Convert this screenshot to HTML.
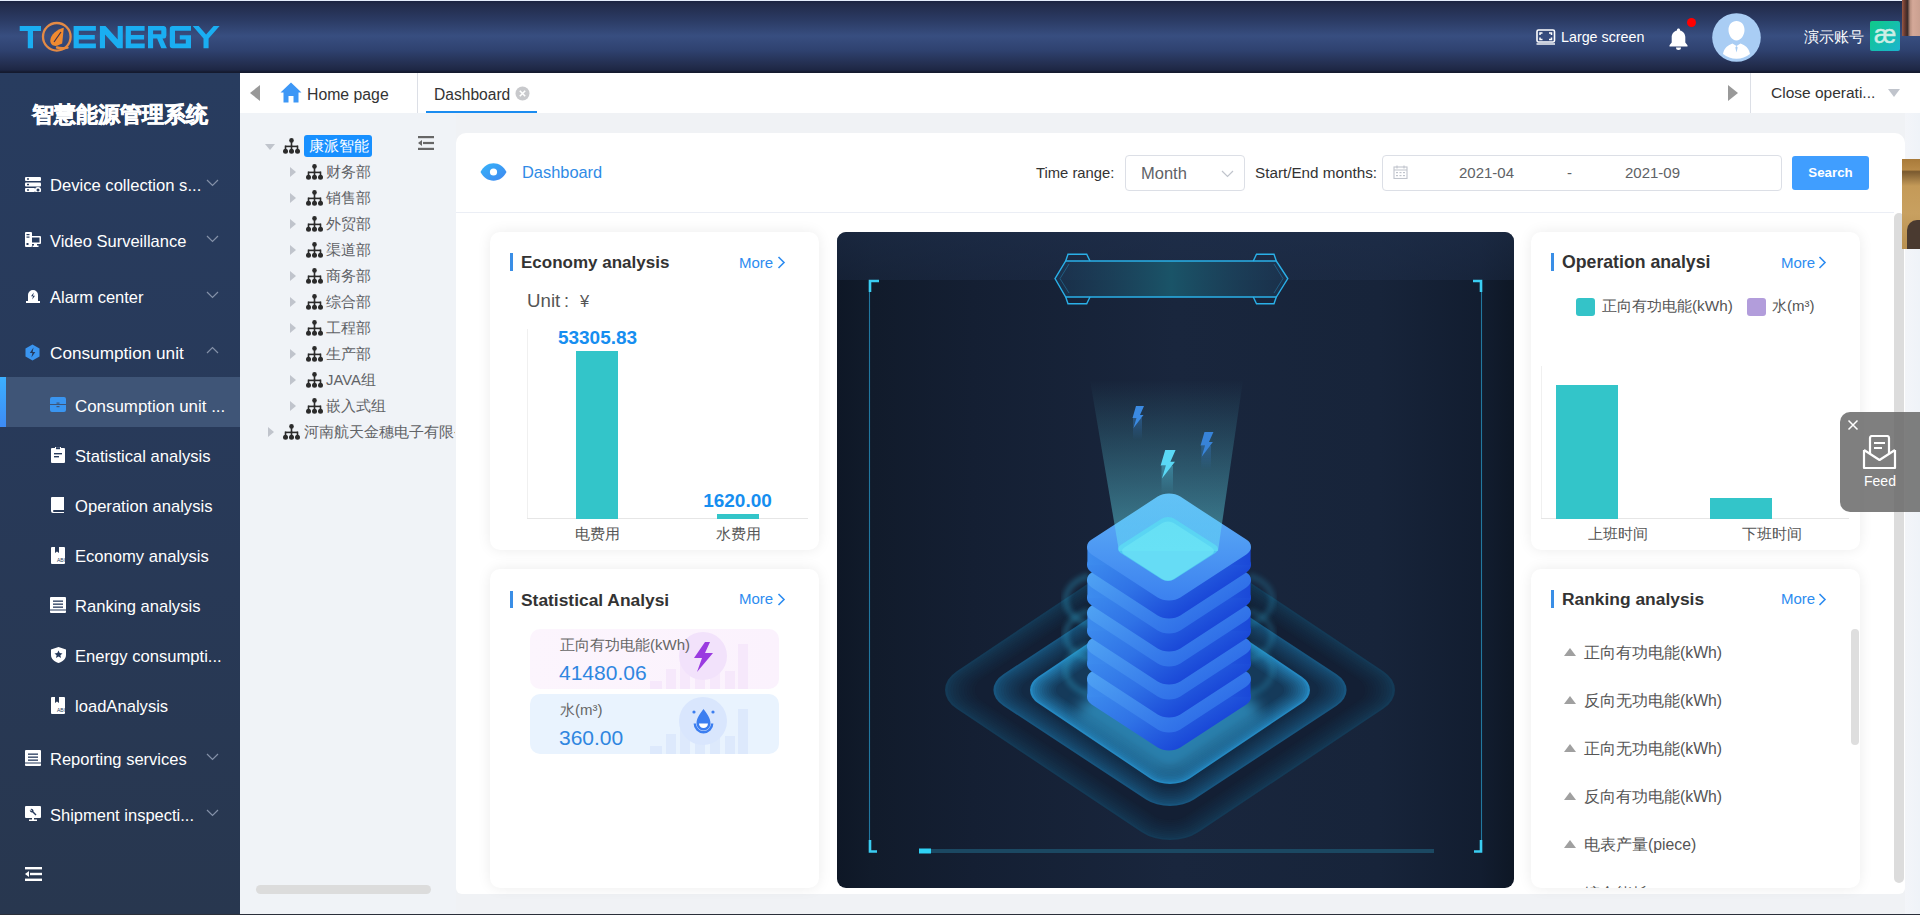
<!DOCTYPE html>
<html><head><meta charset="utf-8">
<style>
*{box-sizing:border-box;margin:0;padding:0}
html,body{width:1920px;height:915px;overflow:hidden;background:#f0f2f5;font-family:"Liberation Sans",sans-serif;position:relative}
.a{position:absolute}
.hdr{left:0;top:0;width:1920px;height:73px;background:linear-gradient(to bottom,#e6eefc 0,#e6eefc 1px,#1a2240 1px,#222b4a 4px,#2b3b64 20px,#384e80 36px,#2f4270 50px,#222c4c 66px,#1d2644 70px,#141a2e 72px,#141a2e 73px)}
.side{left:0;top:73px;width:240px;height:842px;background:linear-gradient(180deg,#283c5f 0,#283a5a 40%,#28374f 100%)}
.tabs{left:240px;top:73px;width:1680px;height:40px;background:#fff}
.tree{left:240px;top:113px;width:216px;height:802px;background:#f0f3f7}
.card{left:456px;top:133px;width:1449px;height:761px;background:#fff;border-radius:10px 10px 6px 6px}
.sc{background:#fff;border-radius:10px;box-shadow:0 0 14px rgba(0,0,0,.08)}
.mi{color:#fff;font-size:16.5px;white-space:nowrap}
.tt{color:#333;font-size:18px;font-weight:bold}
.more{color:#2d8cf0;font-size:16px}
</style></head><body>
<div class="a hdr"></div>
<div class="a side"></div>
<div class="a tabs"></div>
<div class="a tree"></div>
<div class="a card"></div>


<!-- HEADER -->
<svg class="a" style="left:18px;top:20px" width="205" height="34" viewBox="18 20 205 34">
<g fill="#1aaef2">
<path d="M19.7 26h21.3v5h-8v17.2h-5.2V31h-8.1z"/>
<path d="M73.6 26h22.3v4.8H78.8v4.2h16v4.6h-16v3.8h17.1v4.8H73.6z"/>
<path d="M99.9 26h5.6l12.2 13.5V26h5.1v22.2h-5.3l-12.5-13.8v13.8h-5.1z"/>
<path d="M125.7 26h18.9v4.8h-13.7v4.2h13.2v4.6h-13.2v3.8h13.8v4.8h-19z"/>
<path d="M148 26h16a3 3 0 0 1 2.4 3v6.5a3 3 0 0 1-2.4 3h-1.5l4.4 9.7h-5.6l-4.2-9.6h-4v9.6H148zM153.1 30.6v3.7h8.2v-3.7z"/>
<path d="M172.5 26h18.5v4.8h-16v12.6h10.8v-3.8h-6v-4.3h11.2v12.9h-18.5a2.7 2.7 0 0 1-2.7-2.7V28.7a2.7 2.7 0 0 1 2.7-2.7z"/>
<path d="M192.7 26h6l7.4 8.6 7.5-8.6h6l-11 12.4v9.8h-5.1v-9.8z"/>
</g>
<circle cx="56.8" cy="36.8" r="13.8" fill="none" stroke="#e38a45" stroke-width="2.3"/>
<path d="M57 47.5 C61 48.5 64.5 48.3 67.5 47.6" fill="none" stroke="#e8893a" stroke-width="2.4" stroke-linecap="round"/>
<path fill="#f08a30" d="M63.8 27.8 C57 29.5 50.5 34.5 50.3 40.5 C50.2 44.5 53.5 46.5 57 45.8 L62.2 43.5 Z"/>
<path d="M54 42 L61 32" stroke="#3a3050" stroke-width="1.2" fill="none"/>
</svg>
<svg class="a" style="left:1536px;top:29px" width="20" height="16" viewBox="0 0 20 16"><rect x="1" y="1" width="17.5" height="12" rx="1.5" fill="none" stroke="#fff" stroke-width="1.6"/><rect x="0.5" y="14.3" width="18.5" height="1.4" fill="#fff"/><path d="M4 6V4h2.5M15.5 6V4H13M4 8.5v2h2.5M15.5 8.5v2H13" fill="none" stroke="#fff" stroke-width="1.5"/></svg>
<div class="a" style="left:1561px;top:28px;color:#fff;font-size:14.3px;line-height:18px;white-space:nowrap">Large screen</div>
<svg class="a" style="left:1669px;top:27px" width="19" height="23" viewBox="0 0 19 23"><path fill="#fff" d="M9.5 1.5c.9 0 1.5.6 1.5 1.4v.6c3.2.7 5.3 3.4 5.3 6.8v5.2l2.2 2.7v1.3H.5v-1.3l2.2-2.7v-5.2c0-3.4 2.1-6.1 5.3-6.8v-.6c0-.8.6-1.4 1.5-1.4zM7 20.5h5a2.5 2.5 0 0 1-5 0z"/></svg>
<div class="a" style="left:1687px;top:18px;width:9px;height:9px;border-radius:50%;background:#f00"></div>
<svg class="a" style="left:1712px;top:13px" width="49" height="49" viewBox="0 0 49 49"><circle cx="24.5" cy="24.5" r="24.3" fill="#a9cdf4"/><path fill="#fff" d="M24.5 8c4.8 0 8 3.8 8 9s-3.5 10.5-8 10.5-8-5.3-8-10.5 3.2-9 8-9zM11 41c1-6 5-9 9.5-10.5l4 2.5 4-2.5C33 32 37 35 38 41c-3.8 3-8.5 4.7-13.5 4.7S14.8 44 11 41z"/><path d="M24.5 33l-1.2 1.5 1.2 5 1.2-5z" fill="#a9cdf4"/></svg>
<div class="a" style="left:1804px;top:28px;color:#fff;font-size:14.8px;line-height:18px;white-space:nowrap">演示账号</div>
<div class="a" style="left:1870px;top:21px;width:30px;height:30px;border-radius:2px;background:linear-gradient(135deg,#0fca88,#1bb4cf)"></div>
<div class="a" style="left:1870px;top:20px;width:30px;height:30px;color:#cdeee6;font-size:25px;line-height:28px;text-align:center;-webkit-text-stroke:0.5px #cdeee6">æ</div>
<div class="a" style="left:1902px;top:0;width:18px;height:36px;background:linear-gradient(90deg,#9a5a45 0,#6a3a30 15%,#3a2a28 30%,#b89080 45%,#d4a898 60%,#caa090 100%)"></div>

<!-- TABS -->
<div class="a" style="left:250px;top:85px;width:0;height:0;border-top:8px solid transparent;border-bottom:8px solid transparent;border-right:10px solid #999"></div>
<svg class="a" style="left:280px;top:82px" width="22" height="21" viewBox="0 0 22 21"><path fill="#3d97f6" d="M11 0.5l10.5 10h-3v10h-5v-6.5h-5v6.5h-5v-10h-3z"/></svg>
<div class="a" style="left:307px;top:85.5px;color:#333;font-size:15.8px;line-height:18px;white-space:nowrap">Home page</div>
<div class="a" style="left:417px;top:73px;width:1px;height:40px;background:#dcdfe6"></div>
<div class="a" style="left:434px;top:85.5px;color:#333;font-size:15.6px;line-height:18px;white-space:nowrap">Dashboard</div>
<svg class="a" style="left:515px;top:86px" width="15" height="15" viewBox="0 0 15 15"><circle cx="7.5" cy="7.5" r="7" fill="#c8c9cc"/><path d="M4.8 4.8l5.4 5.4M10.2 4.8l-5.4 5.4" stroke="#fff" stroke-width="1.6"/></svg>
<div class="a" style="left:426px;top:111px;width:111px;height:2px;background:#1a8cf0"></div>
<div class="a" style="left:1728px;top:85px;width:0;height:0;border-top:8px solid transparent;border-bottom:8px solid transparent;border-left:10px solid #999"></div>
<div class="a" style="left:1750px;top:73px;width:1px;height:40px;background:#dcdfe6"></div>
<div class="a" style="left:1771px;top:84px;color:#333;font-size:15.5px;line-height:18px;white-space:nowrap">Close operati...</div>
<div class="a" style="left:1888px;top:89px;width:0;height:0;border-left:6px solid transparent;border-right:6px solid transparent;border-top:8px solid #c0c4cc"></div>

<!-- TREE -->
<div class="a" style="left:265px;top:144px;width:0;height:0;border-left:5px solid transparent;border-right:5px solid transparent;border-top:6px solid #c0c4cc"></div>
<div class="a" style="left:283px;top:138px"><svg width="17" height="16" viewBox="0 0 17 16"><g fill="#2b2b2b"><circle cx="8.5" cy="2.4" r="2.3"/><rect x="7.7" y="3" width="1.6" height="6"/><rect x="2" y="7.6" width="13" height="1.6"/><rect x="1.7" y="7.6" width="1.6" height="4"/><rect x="13.7" y="7.6" width="1.6" height="4"/><rect x="7.7" y="7.6" width="1.6" height="4"/><circle cx="2.5" cy="13.2" r="2.5"/><circle cx="8.5" cy="13.2" r="2.5"/><circle cx="14.5" cy="13.2" r="2.5"/></g></svg></div>
<div class="a" style="left:304px;top:135px;width:68px;height:22px;background:#1890ff;border-radius:3px"></div>
<div class="a" style="left:309px;top:137px;color:#fff;font-size:14.8px;line-height:18px;white-space:nowrap">康派智能</div>
<svg class="a" style="left:418px;top:136px" width="16" height="14" viewBox="0 0 16 14"><g fill="#666"><rect x="0" y="0" width="16" height="2.2"/><rect x="5" y="5.9" width="11" height="2.2"/><rect x="0" y="11.8" width="16" height="2.2"/><path d="M0 7l4-3v6z"/></g></svg>
<div class="a" style="left:290px;top:167px;width:0;height:0;border-top:5px solid transparent;border-bottom:5px solid transparent;border-left:6px solid #c0c4cc"></div>
<div class="a" style="left:306px;top:164px"><svg width="17" height="16" viewBox="0 0 17 16"><g fill="#2b2b2b"><circle cx="8.5" cy="2.4" r="2.3"/><rect x="7.7" y="3" width="1.6" height="6"/><rect x="2" y="7.6" width="13" height="1.6"/><rect x="1.7" y="7.6" width="1.6" height="4"/><rect x="13.7" y="7.6" width="1.6" height="4"/><rect x="7.7" y="7.6" width="1.6" height="4"/><circle cx="2.5" cy="13.2" r="2.5"/><circle cx="8.5" cy="13.2" r="2.5"/><circle cx="14.5" cy="13.2" r="2.5"/></g></svg></div>
<div class="a" style="left:326px;top:163px;color:#606266;font-size:14.8px;line-height:18px;white-space:nowrap">财务部</div>
<div class="a" style="left:290px;top:193px;width:0;height:0;border-top:5px solid transparent;border-bottom:5px solid transparent;border-left:6px solid #c0c4cc"></div>
<div class="a" style="left:306px;top:190px"><svg width="17" height="16" viewBox="0 0 17 16"><g fill="#2b2b2b"><circle cx="8.5" cy="2.4" r="2.3"/><rect x="7.7" y="3" width="1.6" height="6"/><rect x="2" y="7.6" width="13" height="1.6"/><rect x="1.7" y="7.6" width="1.6" height="4"/><rect x="13.7" y="7.6" width="1.6" height="4"/><rect x="7.7" y="7.6" width="1.6" height="4"/><circle cx="2.5" cy="13.2" r="2.5"/><circle cx="8.5" cy="13.2" r="2.5"/><circle cx="14.5" cy="13.2" r="2.5"/></g></svg></div>
<div class="a" style="left:326px;top:189px;color:#606266;font-size:14.8px;line-height:18px;white-space:nowrap">销售部</div>
<div class="a" style="left:290px;top:219px;width:0;height:0;border-top:5px solid transparent;border-bottom:5px solid transparent;border-left:6px solid #c0c4cc"></div>
<div class="a" style="left:306px;top:216px"><svg width="17" height="16" viewBox="0 0 17 16"><g fill="#2b2b2b"><circle cx="8.5" cy="2.4" r="2.3"/><rect x="7.7" y="3" width="1.6" height="6"/><rect x="2" y="7.6" width="13" height="1.6"/><rect x="1.7" y="7.6" width="1.6" height="4"/><rect x="13.7" y="7.6" width="1.6" height="4"/><rect x="7.7" y="7.6" width="1.6" height="4"/><circle cx="2.5" cy="13.2" r="2.5"/><circle cx="8.5" cy="13.2" r="2.5"/><circle cx="14.5" cy="13.2" r="2.5"/></g></svg></div>
<div class="a" style="left:326px;top:215px;color:#606266;font-size:14.8px;line-height:18px;white-space:nowrap">外贸部</div>
<div class="a" style="left:290px;top:245px;width:0;height:0;border-top:5px solid transparent;border-bottom:5px solid transparent;border-left:6px solid #c0c4cc"></div>
<div class="a" style="left:306px;top:242px"><svg width="17" height="16" viewBox="0 0 17 16"><g fill="#2b2b2b"><circle cx="8.5" cy="2.4" r="2.3"/><rect x="7.7" y="3" width="1.6" height="6"/><rect x="2" y="7.6" width="13" height="1.6"/><rect x="1.7" y="7.6" width="1.6" height="4"/><rect x="13.7" y="7.6" width="1.6" height="4"/><rect x="7.7" y="7.6" width="1.6" height="4"/><circle cx="2.5" cy="13.2" r="2.5"/><circle cx="8.5" cy="13.2" r="2.5"/><circle cx="14.5" cy="13.2" r="2.5"/></g></svg></div>
<div class="a" style="left:326px;top:241px;color:#606266;font-size:14.8px;line-height:18px;white-space:nowrap">渠道部</div>
<div class="a" style="left:290px;top:271px;width:0;height:0;border-top:5px solid transparent;border-bottom:5px solid transparent;border-left:6px solid #c0c4cc"></div>
<div class="a" style="left:306px;top:268px"><svg width="17" height="16" viewBox="0 0 17 16"><g fill="#2b2b2b"><circle cx="8.5" cy="2.4" r="2.3"/><rect x="7.7" y="3" width="1.6" height="6"/><rect x="2" y="7.6" width="13" height="1.6"/><rect x="1.7" y="7.6" width="1.6" height="4"/><rect x="13.7" y="7.6" width="1.6" height="4"/><rect x="7.7" y="7.6" width="1.6" height="4"/><circle cx="2.5" cy="13.2" r="2.5"/><circle cx="8.5" cy="13.2" r="2.5"/><circle cx="14.5" cy="13.2" r="2.5"/></g></svg></div>
<div class="a" style="left:326px;top:267px;color:#606266;font-size:14.8px;line-height:18px;white-space:nowrap">商务部</div>
<div class="a" style="left:290px;top:297px;width:0;height:0;border-top:5px solid transparent;border-bottom:5px solid transparent;border-left:6px solid #c0c4cc"></div>
<div class="a" style="left:306px;top:294px"><svg width="17" height="16" viewBox="0 0 17 16"><g fill="#2b2b2b"><circle cx="8.5" cy="2.4" r="2.3"/><rect x="7.7" y="3" width="1.6" height="6"/><rect x="2" y="7.6" width="13" height="1.6"/><rect x="1.7" y="7.6" width="1.6" height="4"/><rect x="13.7" y="7.6" width="1.6" height="4"/><rect x="7.7" y="7.6" width="1.6" height="4"/><circle cx="2.5" cy="13.2" r="2.5"/><circle cx="8.5" cy="13.2" r="2.5"/><circle cx="14.5" cy="13.2" r="2.5"/></g></svg></div>
<div class="a" style="left:326px;top:293px;color:#606266;font-size:14.8px;line-height:18px;white-space:nowrap">综合部</div>
<div class="a" style="left:290px;top:323px;width:0;height:0;border-top:5px solid transparent;border-bottom:5px solid transparent;border-left:6px solid #c0c4cc"></div>
<div class="a" style="left:306px;top:320px"><svg width="17" height="16" viewBox="0 0 17 16"><g fill="#2b2b2b"><circle cx="8.5" cy="2.4" r="2.3"/><rect x="7.7" y="3" width="1.6" height="6"/><rect x="2" y="7.6" width="13" height="1.6"/><rect x="1.7" y="7.6" width="1.6" height="4"/><rect x="13.7" y="7.6" width="1.6" height="4"/><rect x="7.7" y="7.6" width="1.6" height="4"/><circle cx="2.5" cy="13.2" r="2.5"/><circle cx="8.5" cy="13.2" r="2.5"/><circle cx="14.5" cy="13.2" r="2.5"/></g></svg></div>
<div class="a" style="left:326px;top:319px;color:#606266;font-size:14.8px;line-height:18px;white-space:nowrap">工程部</div>
<div class="a" style="left:290px;top:349px;width:0;height:0;border-top:5px solid transparent;border-bottom:5px solid transparent;border-left:6px solid #c0c4cc"></div>
<div class="a" style="left:306px;top:346px"><svg width="17" height="16" viewBox="0 0 17 16"><g fill="#2b2b2b"><circle cx="8.5" cy="2.4" r="2.3"/><rect x="7.7" y="3" width="1.6" height="6"/><rect x="2" y="7.6" width="13" height="1.6"/><rect x="1.7" y="7.6" width="1.6" height="4"/><rect x="13.7" y="7.6" width="1.6" height="4"/><rect x="7.7" y="7.6" width="1.6" height="4"/><circle cx="2.5" cy="13.2" r="2.5"/><circle cx="8.5" cy="13.2" r="2.5"/><circle cx="14.5" cy="13.2" r="2.5"/></g></svg></div>
<div class="a" style="left:326px;top:345px;color:#606266;font-size:14.8px;line-height:18px;white-space:nowrap">生产部</div>
<div class="a" style="left:290px;top:375px;width:0;height:0;border-top:5px solid transparent;border-bottom:5px solid transparent;border-left:6px solid #c0c4cc"></div>
<div class="a" style="left:306px;top:372px"><svg width="17" height="16" viewBox="0 0 17 16"><g fill="#2b2b2b"><circle cx="8.5" cy="2.4" r="2.3"/><rect x="7.7" y="3" width="1.6" height="6"/><rect x="2" y="7.6" width="13" height="1.6"/><rect x="1.7" y="7.6" width="1.6" height="4"/><rect x="13.7" y="7.6" width="1.6" height="4"/><rect x="7.7" y="7.6" width="1.6" height="4"/><circle cx="2.5" cy="13.2" r="2.5"/><circle cx="8.5" cy="13.2" r="2.5"/><circle cx="14.5" cy="13.2" r="2.5"/></g></svg></div>
<div class="a" style="left:326px;top:371px;color:#606266;font-size:14.8px;line-height:18px;white-space:nowrap">JAVA组</div>
<div class="a" style="left:290px;top:401px;width:0;height:0;border-top:5px solid transparent;border-bottom:5px solid transparent;border-left:6px solid #c0c4cc"></div>
<div class="a" style="left:306px;top:398px"><svg width="17" height="16" viewBox="0 0 17 16"><g fill="#2b2b2b"><circle cx="8.5" cy="2.4" r="2.3"/><rect x="7.7" y="3" width="1.6" height="6"/><rect x="2" y="7.6" width="13" height="1.6"/><rect x="1.7" y="7.6" width="1.6" height="4"/><rect x="13.7" y="7.6" width="1.6" height="4"/><rect x="7.7" y="7.6" width="1.6" height="4"/><circle cx="2.5" cy="13.2" r="2.5"/><circle cx="8.5" cy="13.2" r="2.5"/><circle cx="14.5" cy="13.2" r="2.5"/></g></svg></div>
<div class="a" style="left:326px;top:397px;color:#606266;font-size:14.8px;line-height:18px;white-space:nowrap">嵌入式组</div>
<div class="a" style="left:268px;top:427px;width:0;height:0;border-top:5px solid transparent;border-bottom:5px solid transparent;border-left:6px solid #c0c4cc"></div>
<div class="a" style="left:283px;top:424px"><svg width="17" height="16" viewBox="0 0 17 16"><g fill="#2b2b2b"><circle cx="8.5" cy="2.4" r="2.3"/><rect x="7.7" y="3" width="1.6" height="6"/><rect x="2" y="7.6" width="13" height="1.6"/><rect x="1.7" y="7.6" width="1.6" height="4"/><rect x="13.7" y="7.6" width="1.6" height="4"/><rect x="7.7" y="7.6" width="1.6" height="4"/><circle cx="2.5" cy="13.2" r="2.5"/><circle cx="8.5" cy="13.2" r="2.5"/><circle cx="14.5" cy="13.2" r="2.5"/></g></svg></div>
<div class="a" style="left:304px;top:423px;width:151px;overflow:hidden;color:#606266;font-size:14.8px;line-height:18px;white-space:nowrap">河南航天金穗电子有限公司</div>
<div class="a" style="left:256px;top:885px;width:175px;height:9px;border-radius:5px;background:#dcdcdc"></div>


<!-- CARD HEADER -->
<svg class="a" style="left:480px;top:163px" width="27" height="18" viewBox="0 0 27 18"><defs><linearGradient id="eg" x1="0" y1="0" x2="1" y2="1"><stop offset="0" stop-color="#36b4fa"/><stop offset="1" stop-color="#3f86ef"/></linearGradient></defs><path fill="url(#eg)" d="M0.5 9C3.5 3.5 8 0.3 13.5 0.3S23.5 3.5 26.5 9c-3 5.5-7.5 8.7-13 8.7S3.5 14.5 0.5 9z"/><circle cx="13.5" cy="9" r="3.6" fill="#fff"/></svg>
<div class="a" style="left:522px;top:163px;color:#2f8be6;font-size:16.4px;line-height:18px;white-space:nowrap">Dashboard</div>
<div class="a" style="left:1036px;top:164px;color:#333;font-size:14.8px;line-height:18px;white-space:nowrap">Time range:</div>
<div class="a" style="left:1125px;top:155px;width:120px;height:36px;border:1px solid #dcdfe6;border-radius:4px;background:#fff"></div>
<div class="a" style="left:1141px;top:163.5px;color:#606266;font-size:16.5px;line-height:18px;white-space:nowrap">Month</div>
<svg class="a" style="left:1221px;top:170px" width="13" height="8" viewBox="0 0 13 8"><path d="M1 1l5.5 5.5L12 1" fill="none" stroke="#c0c4cc" stroke-width="1.2"/></svg>
<div class="a" style="left:1255px;top:164px;color:#333;font-size:15.25px;line-height:18px;white-space:nowrap">Start/End months:</div>
<div class="a" style="left:1382px;top:155px;width:400px;height:36px;border:1px solid #dcdfe6;border-radius:4px;background:#fff"></div>
<svg class="a" style="left:1393px;top:165px" width="15" height="14" viewBox="0 0 15 14"><g fill="none" stroke="#c0c4cc" stroke-width="1.1"><rect x="1" y="2" width="13" height="11.5"/><path d="M1 5h13M4 0.5v3M11 0.5v3"/></g><g fill="#c0c4cc"><rect x="3" y="7" width="2" height="1.2"/><rect x="6.5" y="7" width="2" height="1.2"/><rect x="10" y="7" width="2" height="1.2"/><rect x="3" y="10" width="2" height="1.2"/><rect x="6.5" y="10" width="2" height="1.2"/><rect x="10" y="10" width="2" height="1.2"/></g></svg>
<div class="a" style="left:1459px;top:164px;color:#606266;font-size:15px;line-height:18px;white-space:nowrap">2021-04</div>
<div class="a" style="left:1567px;top:164px;color:#606266;font-size:15px;line-height:18px;white-space:nowrap">-</div>
<div class="a" style="left:1625px;top:164px;color:#606266;font-size:15px;line-height:18px;white-space:nowrap">2021-09</div>
<div class="a" style="left:1792px;top:156px;width:77px;height:34px;background:#409eff;border-radius:3px"></div>
<div class="a" style="left:1792px;top:164px;width:77px;text-align:center;color:#fff;font-size:13.3px;font-weight:bold;line-height:18px">Search</div>
<div class="a" style="left:456px;top:212px;width:1438px;height:1px;background:#ebeef5"></div>

<!-- SUB CARDS -->
<div class="a sc" style="left:490px;top:232px;width:329px;height:318px"></div>
<div class="a sc" style="left:490px;top:569px;width:329px;height:319px"></div>
<div class="a sc" style="left:1531px;top:232px;width:329px;height:318px"></div>
<div class="a sc" style="left:1531px;top:569px;width:329px;height:319px"></div>

<!-- Economy -->
<div class="a" style="left:510px;top:253px;width:3px;height:18px;background:#3a8ee6"></div>
<div class="a tt" style="left:521px;top:254px;font-size:17px;line-height:18px">Economy analysis</div>
<div class="a more" style="left:739px;top:254px;font-size:15px;line-height:18px">More</div>
<svg class="a" style="left:777px;top:256px" width="9" height="13" viewBox="0 0 9 13"><path d="M1.5 1l5.5 5.5L1.5 12" fill="none" stroke="#2d8cf0" stroke-width="1.6"/></svg>
<div class="a" style="left:527px;top:291px;color:#555;font-size:18.7px;line-height:20px;white-space:nowrap">Unit</div><div class="a" style="left:564px;top:291px;color:#555;font-size:18px;line-height:20px;white-space:nowrap">:</div><div class="a" style="left:580px;top:291px;color:#555;font-size:16.5px;line-height:20px;white-space:nowrap">¥</div>
<div class="a" style="left:527px;top:329px;width:1px;height:190px;background:#f0f0f0"></div>
<div class="a" style="left:527px;top:518px;width:281px;height:1px;background:#e6e6e6"></div>
<div class="a" style="left:576px;top:351px;width:42px;height:168px;background:#33c5c9"></div>
<div class="a" style="left:717px;top:514px;width:42px;height:5px;background:#33c5c9"></div>
<div class="a" style="left:520px;top:328px;width:155px;text-align:center;color:#168ef0;font-size:19px;font-weight:bold;line-height:20px">53305.83</div>
<div class="a" style="left:660px;top:491px;width:155px;text-align:center;color:#168ef0;font-size:19px;font-weight:bold;line-height:20px">1620.00</div>
<div class="a" style="left:547px;top:525px;width:100px;text-align:center;color:#555;font-size:14.5px;line-height:18px">电费用</div>
<div class="a" style="left:688px;top:525px;width:100px;text-align:center;color:#555;font-size:14.5px;line-height:18px">水费用</div>

<!-- Statistical -->
<div class="a" style="left:510px;top:591px;width:3px;height:17px;background:#3a8ee6"></div>
<div class="a tt" style="left:521px;top:591px;font-size:17.4px;line-height:18px">Statistical Analysi</div>
<div class="a more" style="left:739px;top:590px;font-size:15px;line-height:18px">More</div>
<svg class="a" style="left:777px;top:593px" width="9" height="13" viewBox="0 0 9 13"><path d="M1.5 1l5.5 5.5L1.5 12" fill="none" stroke="#2d8cf0" stroke-width="1.6"/></svg>
<div class="a" style="left:530px;top:629px;width:249px;height:60px;border-radius:10px;background:linear-gradient(90deg,#fcf5fd,#fbf2fd);overflow:hidden">
 <svg style="position:absolute;left:120px;top:10px" width="120" height="50" viewBox="0 0 120 50"><g fill="#f6e8fb"><rect x="0" y="42" width="12" height="8"/><rect x="16" y="30" width="10" height="20"/><rect x="30" y="20" width="10" height="30"/><rect x="45" y="35" width="10" height="15"/><rect x="60" y="25" width="10" height="25"/><rect x="75" y="32" width="10" height="18"/><rect x="88" y="5" width="10" height="45"/></g></svg>
 <div style="position:absolute;left:149px;top:3px;width:48px;height:48px;border-radius:50%;background:#f2e2fb"></div>
</div>
<div class="a" style="left:530px;top:694px;width:249px;height:60px;border-radius:10px;background:#e9f3fe;overflow:hidden">
 <svg style="position:absolute;left:120px;top:10px" width="120" height="50" viewBox="0 0 120 50"><g fill="#dde9fc"><rect x="0" y="42" width="12" height="8"/><rect x="16" y="30" width="10" height="20"/><rect x="30" y="20" width="10" height="30"/><rect x="45" y="35" width="10" height="15"/><rect x="60" y="25" width="10" height="25"/><rect x="75" y="32" width="10" height="18"/><rect x="88" y="5" width="10" height="45"/></g></svg>
 <div style="position:absolute;left:149px;top:3px;width:48px;height:48px;border-radius:50%;background:#d9e6fd"></div>
</div>
<svg class="a" style="left:691px;top:641px" width="25" height="32" viewBox="0 0 25 32"><path fill="#9a3be0" d="M14 1L3 17h8l-5 14L22 12h-8l5-11z"/></svg>
<svg class="a" style="left:692px;top:706px" width="23" height="29" viewBox="0 0 23 29"><path fill="#3c7ef0" d="M11.5 3C8 8 4.5 12 4.5 17.5a7 7 0 0 0 14 0C18.5 12 15 8 11.5 3z"/><path fill="#fff" d="M7 17.5h9a4.5 4.5 0 0 1-9 0z"/><path fill="#3c7ef0" d="M8.5 17.5h6a3 3 0 0 1-6 0z" opacity="0"/><circle cx="2" cy="6" r="1.6" fill="#3c7ef0"/><circle cx="21" cy="6" r="1.6" fill="#3c7ef0"/><path d="M2.8 17.5a8.7 8.7 0 0 0 17.4 0" fill="none" stroke="#3c7ef0" stroke-width="2.4"/></svg>
<div class="a" style="left:560px;top:636px;color:#666;font-size:15px;line-height:18px;white-space:nowrap">正向有功电能(kWh)</div>
<div class="a" style="left:559px;top:661px;color:#2f86e0;font-size:21px;line-height:24px;white-space:nowrap">41480.06</div>
<div class="a" style="left:560px;top:701px;color:#666;font-size:15px;line-height:18px;white-space:nowrap">水(m³)</div>
<div class="a" style="left:559px;top:726px;color:#2f86e0;font-size:21px;line-height:24px;white-space:nowrap">360.00</div>

<!-- Operation -->
<div class="a" style="left:1551px;top:253px;width:3px;height:18px;background:#3a8ee6"></div>
<div class="a tt" style="left:1562px;top:253px;font-size:17.7px;line-height:18px">Operation analysi</div>
<div class="a more" style="left:1781px;top:254px;font-size:15px;line-height:18px">More</div>
<svg class="a" style="left:1818px;top:256px" width="9" height="13" viewBox="0 0 9 13"><path d="M1.5 1l5.5 5.5L1.5 12" fill="none" stroke="#2d8cf0" stroke-width="1.6"/></svg>
<div class="a" style="left:1576px;top:298px;width:19px;height:18px;border-radius:3px;background:#34c3c8"></div>
<div class="a" style="left:1602px;top:297px;color:#555;font-size:15.3px;line-height:18px;white-space:nowrap">正向有功电能(kWh)</div>
<div class="a" style="left:1747px;top:298px;width:19px;height:18px;border-radius:3px;background:#b29ddb"></div>
<div class="a" style="left:1772px;top:297px;color:#555;font-size:15px;line-height:18px;white-space:nowrap">水(m³)</div>
<div class="a" style="left:1541px;top:366px;width:1px;height:153px;background:#f0f0f0"></div>
<div class="a" style="left:1541px;top:518px;width:308px;height:1px;background:#e6e6e6"></div>
<div class="a" style="left:1556px;top:385px;width:62px;height:134px;background:#33c5c9"></div>
<div class="a" style="left:1710px;top:498px;width:62px;height:21px;background:#33c5c9"></div>
<div class="a" style="left:1568px;top:525px;width:100px;text-align:center;color:#555;font-size:14.5px;line-height:18px">上班时间</div>
<div class="a" style="left:1722px;top:525px;width:100px;text-align:center;color:#555;font-size:14.5px;line-height:18px">下班时间</div>

<!-- Ranking -->
<div class="a" style="left:1551px;top:590px;width:3px;height:18px;background:#3a8ee6"></div>
<div class="a tt" style="left:1562px;top:590px;font-size:17.4px;line-height:18px">Ranking analysis</div>
<div class="a more" style="left:1781px;top:590px;font-size:15px;line-height:18px">More</div>
<svg class="a" style="left:1818px;top:593px" width="9" height="13" viewBox="0 0 9 13"><path d="M1.5 1l5.5 5.5L1.5 12" fill="none" stroke="#2d8cf0" stroke-width="1.6"/></svg>
<div class="a" style="left:1564px;top:648px;width:0;height:0;border-left:6.5px solid transparent;border-right:6.5px solid transparent;border-bottom:8px solid #a0a0a0"></div>
<div class="a" style="left:1584px;top:644px;color:#555;font-size:15.8px;line-height:18px;white-space:nowrap">正向有功电能(kWh)</div>
<div class="a" style="left:1564px;top:696px;width:0;height:0;border-left:6.5px solid transparent;border-right:6.5px solid transparent;border-bottom:8px solid #a0a0a0"></div>
<div class="a" style="left:1584px;top:692px;color:#555;font-size:15.8px;line-height:18px;white-space:nowrap">反向无功电能(kWh)</div>
<div class="a" style="left:1564px;top:744px;width:0;height:0;border-left:6.5px solid transparent;border-right:6.5px solid transparent;border-bottom:8px solid #a0a0a0"></div>
<div class="a" style="left:1584px;top:740px;color:#555;font-size:15.8px;line-height:18px;white-space:nowrap">正向无功电能(kWh)</div>
<div class="a" style="left:1564px;top:792px;width:0;height:0;border-left:6.5px solid transparent;border-right:6.5px solid transparent;border-bottom:8px solid #a0a0a0"></div>
<div class="a" style="left:1584px;top:788px;color:#555;font-size:15.8px;line-height:18px;white-space:nowrap">反向有功电能(kWh)</div>
<div class="a" style="left:1564px;top:840px;width:0;height:0;border-left:6.5px solid transparent;border-right:6.5px solid transparent;border-bottom:8px solid #a0a0a0"></div>
<div class="a" style="left:1584px;top:836px;color:#555;font-size:15.8px;line-height:18px;white-space:nowrap">电表产量(piece)</div>
<div class="a" style="left:1540px;top:882px;width:300px;height:6px;overflow:hidden"><div style="position:absolute;left:44px;top:3px;color:#555;font-size:15.5px;line-height:18px;white-space:nowrap">综合能耗(kgce)</div></div>
<div class="a" style="left:1851px;top:629px;width:8px;height:116px;border-radius:4px;background:#dedede"></div>


<!-- CENTER -->
<svg class="a" style="left:837px;top:232px" width="677" height="656" viewBox="837 232 677 656">
<defs>
<clipPath id="cc"><rect x="837" y="232" width="677" height="656" rx="9"/></clipPath>
<linearGradient id="bgg" x1="0" y1="0" x2="1" y2="0"><stop offset="0" stop-color="#0e1726"/><stop offset="0.05" stop-color="#111b2b"/><stop offset="0.2" stop-color="#141f33"/><stop offset="0.5" stop-color="#19263d"/><stop offset="0.8" stop-color="#17243a"/><stop offset="0.95" stop-color="#121d30"/><stop offset="1" stop-color="#0e1725"/></linearGradient>
<linearGradient id="topg" x1="0" y1="0" x2="0" y2="1"><stop offset="0" stop-color="#213250" stop-opacity="0.55"/><stop offset="1" stop-color="#213250" stop-opacity="0.35"/></linearGradient>
<linearGradient id="beam" x1="0" y1="0" x2="0" y2="1"><stop offset="0" stop-color="#5fe0f0" stop-opacity="0"/><stop offset="0.3" stop-color="#5fe0f0" stop-opacity="0.15"/><stop offset="1" stop-color="#6ae6f5" stop-opacity="0.5"/></linearGradient>
<linearGradient id="hexg" x1="0" y1="0" x2="1" y2="0"><stop offset="0" stop-color="#1c3a58" stop-opacity="0.5"/><stop offset="0.5" stop-color="#1a5468"/><stop offset="1" stop-color="#1c3a58" stop-opacity="0.5"/></linearGradient>
<linearGradient id="side" x1="0" y1="0" x2="1" y2="0"><stop offset="0" stop-color="#3d8cee"/><stop offset="0.5" stop-color="#2f72e6"/><stop offset="1" stop-color="#1a48d8"/></linearGradient>
<linearGradient id="face" x1="0" y1="0" x2="1" y2="1"><stop offset="0" stop-color="#62b4f7"/><stop offset="1" stop-color="#3a7fef"/></linearGradient>
<linearGradient id="face2" x1="0" y1="0" x2="1" y2="0"><stop offset="0" stop-color="#4fa2f3"/><stop offset="1" stop-color="#3070e8"/></linearGradient>
<linearGradient id="tail" x1="0" y1="0" x2="0" y2="1"><stop offset="0" stop-color="#5ad8f5" stop-opacity="0.5"/><stop offset="1" stop-color="#5ad8f5" stop-opacity="0"/></linearGradient>
<filter id="bl6" x="-20%" y="-20%" width="140%" height="140%"><feGaussianBlur stdDeviation="7"/></filter>
<filter id="bl3" x="-20%" y="-20%" width="140%" height="140%"><feGaussianBlur stdDeviation="2.5"/></filter>
</defs>
<defs><linearGradient id="tmg" x1="0" y1="0" x2="0" y2="1"><stop offset="0" stop-color="#fff"/><stop offset="1" stop-color="#000"/></linearGradient><mask id="tm" maskContentUnits="objectBoundingBox"><rect width="1" height="1" fill="url(#tmg)"/></mask></defs>
<g clip-path="url(#cc)">
<rect x="837" y="232" width="677" height="656" fill="url(#bgg)"/>
<rect x="837" y="232" width="677" height="48" fill="url(#topg)"/>
<g transform="translate(1170 690) scale(1 0.667) rotate(45)"><rect x="-170.81" y="-170.81" width="341.63" height="341.63" rx="40.0" ry="40.0" fill="#143a56"/></g>
<g transform="translate(1170 690) scale(1 0.667) rotate(45)"><rect x="-168.41" y="-168.41" width="336.81" height="336.81" rx="38.36363636363637" ry="38.36363636363637" fill="#143550"/></g>
<g transform="translate(1170 690) scale(1 0.667) rotate(45)"><rect x="-166.00" y="-166.00" width="332.00" height="332.00" rx="36.72727272727273" ry="36.72727272727273" fill="#14324c"/></g>
<g transform="translate(1170 690) scale(1 0.667) rotate(45)"><rect x="-163.59" y="-163.59" width="327.18" height="327.18" rx="35.09090909090909" ry="35.09090909090909" fill="#142f48"/></g>
<g transform="translate(1170 690) scale(1 0.667) rotate(45)"><rect x="-161.18" y="-161.18" width="322.37" height="322.37" rx="33.45454545454545" ry="33.45454545454545" fill="#142d45"/></g>
<g transform="translate(1170 690) scale(1 0.667) rotate(45)"><rect x="-158.78" y="-158.78" width="317.55" height="317.55" rx="31.81818181818182" ry="31.81818181818182" fill="#132a42"/></g>
<g transform="translate(1170 690) scale(1 0.667) rotate(45)"><rect x="-156.37" y="-156.37" width="312.74" height="312.74" rx="30.18181818181818" ry="30.18181818181818" fill="#132840"/></g>
<g transform="translate(1170 690) scale(1 0.667) rotate(45)"><rect x="-153.96" y="-153.96" width="307.92" height="307.92" rx="28.545454545454547" ry="28.545454545454547" fill="#13263d"/></g>
<g transform="translate(1170 690) scale(1 0.667) rotate(45)"><rect x="-151.55" y="-151.55" width="303.11" height="303.11" rx="26.909090909090907" ry="26.909090909090907" fill="#13243b"/></g>
<g transform="translate(1170 690) scale(1 0.667) rotate(45)"><rect x="-149.14" y="-149.14" width="298.29" height="298.29" rx="25.272727272727273" ry="25.272727272727273" fill="#132338"/></g>
<g transform="translate(1170 690) scale(1 0.667) rotate(45)"><rect x="-146.74" y="-146.74" width="293.47" height="293.47" rx="23.636363636363637" ry="23.636363636363637" fill="#132136"/></g>
<g transform="translate(1170 690) scale(1 0.667) rotate(45)"><rect x="-144.33" y="-144.33" width="288.66" height="288.66" rx="22.0" ry="22.0" fill="#131f34"/></g>
<g transform="translate(1170 690) scale(1 0.657) rotate(45)"><rect x="-134.83" y="-134.83" width="269.67" height="269.67" rx="34.0" ry="34.0" fill="#18557e"/></g>
<g transform="translate(1170 690) scale(1 0.657) rotate(45)"><rect x="-132.59" y="-132.59" width="265.17" height="265.17" rx="32.472727272727276" ry="32.472727272727276" fill="#174d73"/></g>
<g transform="translate(1170 690) scale(1 0.657) rotate(45)"><rect x="-130.34" y="-130.34" width="260.68" height="260.68" rx="30.945454545454545" ry="30.945454545454545" fill="#16486c"/></g>
<g transform="translate(1170 690) scale(1 0.657) rotate(45)"><rect x="-128.09" y="-128.09" width="256.18" height="256.18" rx="29.418181818181818" ry="29.418181818181818" fill="#164467"/></g>
<g transform="translate(1170 690) scale(1 0.657) rotate(45)"><rect x="-125.84" y="-125.84" width="251.69" height="251.69" rx="27.89090909090909" ry="27.89090909090909" fill="#164061"/></g>
<g transform="translate(1170 690) scale(1 0.657) rotate(45)"><rect x="-123.60" y="-123.60" width="247.19" height="247.19" rx="26.363636363636363" ry="26.363636363636363" fill="#153c5d"/></g>
<g transform="translate(1170 690) scale(1 0.657) rotate(45)"><rect x="-121.35" y="-121.35" width="242.70" height="242.70" rx="24.836363636363636" ry="24.836363636363636" fill="#153958"/></g>
<g transform="translate(1170 690) scale(1 0.657) rotate(45)"><rect x="-119.10" y="-119.10" width="238.21" height="238.21" rx="23.309090909090912" ry="23.309090909090912" fill="#143654"/></g>
<g transform="translate(1170 690) scale(1 0.657) rotate(45)"><rect x="-116.86" y="-116.86" width="233.71" height="233.71" rx="21.78181818181818" ry="21.78181818181818" fill="#143350"/></g>
<g transform="translate(1170 690) scale(1 0.657) rotate(45)"><rect x="-114.61" y="-114.61" width="229.22" height="229.22" rx="20.254545454545454" ry="20.254545454545454" fill="#14304c"/></g>
<g transform="translate(1170 690) scale(1 0.657) rotate(45)"><rect x="-112.36" y="-112.36" width="224.72" height="224.72" rx="18.727272727272727" ry="18.727272727272727" fill="#132d48"/></g>
<g transform="translate(1170 690) scale(1 0.657) rotate(45)"><rect x="-110.11" y="-110.11" width="220.23" height="220.23" rx="17.2" ry="17.2" fill="#132a44"/></g>
<g transform="translate(1170 690) scale(1 0.671) rotate(45)"><rect x="-107.20" y="-107.20" width="214.39" height="214.39" rx="28.0" ry="28.0" fill="#2588c0"/></g>
<g transform="translate(1170 690) scale(1 0.671) rotate(45)"><rect x="-105.11" y="-105.11" width="210.22" height="210.22" rx="26.581818181818182" ry="26.581818181818182" fill="#2279ad"/></g>
<g transform="translate(1170 690) scale(1 0.671) rotate(45)"><rect x="-103.02" y="-103.02" width="206.05" height="206.05" rx="25.163636363636364" ry="25.163636363636364" fill="#2070a1"/></g>
<g transform="translate(1170 690) scale(1 0.671) rotate(45)"><rect x="-100.94" y="-100.94" width="201.87" height="201.87" rx="23.745454545454546" ry="23.745454545454546" fill="#1f6997"/></g>
<g transform="translate(1170 690) scale(1 0.671) rotate(45)"><rect x="-98.85" y="-98.85" width="197.70" height="197.70" rx="22.327272727272728" ry="22.327272727272728" fill="#1d628e"/></g>
<g transform="translate(1170 690) scale(1 0.671) rotate(45)"><rect x="-96.76" y="-96.76" width="193.52" height="193.52" rx="20.90909090909091" ry="20.90909090909091" fill="#1c5b85"/></g>
<g transform="translate(1170 690) scale(1 0.671) rotate(45)"><rect x="-94.68" y="-94.68" width="189.35" height="189.35" rx="19.490909090909092" ry="19.490909090909092" fill="#1b557d"/></g>
<g transform="translate(1170 690) scale(1 0.671) rotate(45)"><rect x="-92.59" y="-92.59" width="185.18" height="185.18" rx="18.07272727272727" ry="18.07272727272727" fill="#194f76"/></g>
<g transform="translate(1170 690) scale(1 0.671) rotate(45)"><rect x="-90.50" y="-90.50" width="181.00" height="181.00" rx="16.654545454545456" ry="16.654545454545456" fill="#184a6e"/></g>
<g transform="translate(1170 690) scale(1 0.671) rotate(45)"><rect x="-88.42" y="-88.42" width="176.83" height="176.83" rx="15.236363636363636" ry="15.236363636363636" fill="#174467"/></g>
<g transform="translate(1170 690) scale(1 0.671) rotate(45)"><rect x="-86.33" y="-86.33" width="172.66" height="172.66" rx="13.818181818181818" ry="13.818181818181818" fill="#163f61"/></g>
<g transform="translate(1170 690) scale(1 0.671) rotate(45)"><rect x="-84.24" y="-84.24" width="168.48" height="168.48" rx="12.4" ry="12.4" fill="#153a5a"/></g>
<g filter="url(#bl6)" opacity="0.55"><g transform="translate(1169 712) scale(1 0.65) rotate(45)"><rect x="-70.91" y="-70.91" width="141.82" height="141.82" rx="20" ry="20" fill="#3ab8f0"/></g></g>
<path d="M1089 576 C1058 584 1058 616 1089 624" fill="none" stroke="#2a9fc8" stroke-width="6" opacity="0.35" filter="url(#bl3)"/>
<path d="M1249 576 C1280 584 1280 616 1249 624" fill="none" stroke="#2a9fc8" stroke-width="6" opacity="0.25" filter="url(#bl3)"/>
<path d="M1089 611 C1058 619 1058 651 1089 659" fill="none" stroke="#2a9fc8" stroke-width="6" opacity="0.35" filter="url(#bl3)"/>
<path d="M1249 611 C1280 619 1280 651 1249 659" fill="none" stroke="#2a9fc8" stroke-width="6" opacity="0.25" filter="url(#bl3)"/>
<path d="M1089 646 C1058 654 1058 686 1089 694" fill="none" stroke="#2a9fc8" stroke-width="6" opacity="0.35" filter="url(#bl3)"/>
<path d="M1249 646 C1280 654 1280 686 1249 694" fill="none" stroke="#2a9fc8" stroke-width="6" opacity="0.25" filter="url(#bl3)"/>
<g transform="translate(1169 697) scale(1 0.652) rotate(45)"><rect x="-62.67" y="-62.67" width="125.34" height="125.34" rx="16" ry="16" fill="url(#side)"/></g>
<rect x="1087.4" y="679" width="163.2" height="18" fill="url(#side)"/>
<g transform="translate(1169 679) scale(1 0.652) rotate(45)"><rect x="-62.67" y="-62.67" width="125.34" height="125.34" rx="16" ry="16" fill="url(#face2)"/></g>
<g transform="translate(1169 664) scale(1 0.652) rotate(45)"><rect x="-62.67" y="-62.67" width="125.34" height="125.34" rx="16" ry="16" fill="url(#side)"/></g>
<rect x="1087.4" y="646" width="163.2" height="18" fill="url(#side)"/>
<g transform="translate(1169 646) scale(1 0.652) rotate(45)"><rect x="-62.67" y="-62.67" width="125.34" height="125.34" rx="16" ry="16" fill="url(#face2)"/></g>
<g transform="translate(1169 631) scale(1 0.652) rotate(45)"><rect x="-62.67" y="-62.67" width="125.34" height="125.34" rx="16" ry="16" fill="url(#side)"/></g>
<rect x="1087.4" y="613" width="163.2" height="18" fill="url(#side)"/>
<g transform="translate(1169 613) scale(1 0.652) rotate(45)"><rect x="-62.67" y="-62.67" width="125.34" height="125.34" rx="16" ry="16" fill="url(#face2)"/></g>
<g transform="translate(1169 598) scale(1 0.652) rotate(45)"><rect x="-62.67" y="-62.67" width="125.34" height="125.34" rx="16" ry="16" fill="url(#side)"/></g>
<rect x="1087.4" y="580" width="163.2" height="18" fill="url(#side)"/>
<g transform="translate(1169 580) scale(1 0.652) rotate(45)"><rect x="-62.67" y="-62.67" width="125.34" height="125.34" rx="16" ry="16" fill="url(#face2)"/></g>
<g transform="translate(1169 565) scale(1 0.652) rotate(45)"><rect x="-62.67" y="-62.67" width="125.34" height="125.34" rx="16" ry="16" fill="url(#side)"/></g>
<rect x="1087.4" y="547" width="163.2" height="18" fill="url(#side)"/>
<g transform="translate(1169 547) scale(1 0.652) rotate(45)"><rect x="-62.67" y="-62.67" width="125.34" height="125.34" rx="16" ry="16" fill="url(#face)"/></g>
<g transform="translate(1168 549) scale(1 0.64) rotate(45)"><rect x="-37.99" y="-37.99" width="75.98" height="75.98" rx="9" ry="9" fill="#4fc8f2"/></g>
<g transform="translate(1168 551) scale(1 0.64) rotate(45)"><rect x="-34.87" y="-34.87" width="69.74" height="69.74" rx="8" ry="8" fill="#66dcf5"/></g>
<path d="M1090 380 L1243 380 L1218 551 L1119 551 Z" fill="url(#beam)"/>
<g transform="translate(1132 406) scale(1.0)" opacity="0.95"><rect x="1" y="12" width="9" height="22" fill="#3d8fea" opacity="0.35" mask="url(#tm)"/><path d="M4 0H12L8 9H11.5L1.5 22L4.5 12H0.5Z" fill="#3d8fea"/></g>
<g transform="translate(1160 450) scale(1.3)" opacity="1.0"><rect x="1" y="12" width="9" height="22" fill="#5ad8f5" opacity="0.35" mask="url(#tm)"/><path d="M4 0H12L8 9H11.5L1.5 22L4.5 12H0.5Z" fill="#5ad8f5"/></g>
<g transform="translate(1200 432) scale(1.12)" opacity="0.9"><rect x="1" y="12" width="9" height="22" fill="#3a8ae6" opacity="0.35" mask="url(#tm)"/><path d="M4 0H12L8 9H11.5L1.5 22L4.5 12H0.5Z" fill="#3a8ae6"/></g>
<path d="M869.5 282 V852 M1481.5 282 V852" stroke="#2a9fd0" stroke-width="1.1" opacity="0.7"/>
<path d="M870 292 V281 H879 M1481 292 V281 H1473 M870 840 V851.5 H877 M1481 840 V851.5 H1474" fill="none" stroke="#3acdf2" stroke-width="2.6"/>
<rect x="919" y="849" width="515" height="4" fill="#1b4862"/>
<rect x="919" y="848.5" width="12" height="5" fill="#2fd2f5"/>
<path d="M1055 278.6 L1065.7 261 H1276.3 L1287.8 278.6 L1276.3 297 H1065.7 Z" fill="url(#hexg)" stroke="#2ab0e8" stroke-width="1.4"/>
<path d="M1060 278.6 L1069 264 M1060 278.6 L1069 293 M1283 278.6 L1274 264 M1283 278.6 L1274 293" stroke="#2a9ad0" stroke-width="0.8" opacity="0.5"/>
<path d="M1065.7 261 L1068 254.2 H1086.7 L1090 261 M1253.3 261 L1256.5 254.2 H1274 L1276.3 261 M1065.7 297 L1068 303.8 H1086.7 L1090 297 M1253.3 297 L1256.5 303.8 H1274 L1276.3 297" fill="none" stroke="#2ab0e8" stroke-width="1.4"/>
</g></svg>

<!-- RIGHT EXTRAS -->
<div class="a" style="left:1905px;top:113px;width:15px;height:802px;background:linear-gradient(90deg,#f3f5f9,#eff3f8)"></div>
<div class="a" style="left:1894px;top:213px;width:10px;height:670px;border-radius:5px;background:#dcdcdc"></div>
<div class="a" style="left:1902px;top:159px;width:18px;height:90px;background:linear-gradient(180deg,#a87a3a 0,#b88a48 12%,#7a5a30 14%,#c49a58 30%,#c8a060 60%,#b89050 100%)"></div><div class="a" style="left:1907px;top:220px;width:13px;height:29px;border-radius:10px 0 0 0;background:#4a3a30"></div>
<div class="a" style="left:1840px;top:412px;width:80px;height:100px;border-radius:10px 0 0 10px;background:rgba(105,105,105,0.85)"></div>
<svg class="a" style="left:1847px;top:419px" width="12" height="12" viewBox="0 0 12 12"><path d="M1.5 1.5l9 9M10.5 1.5l-9 9" stroke="#fff" stroke-width="1.5"/></svg>
<svg class="a" style="left:1862px;top:435px" width="35" height="36" viewBox="0 0 35 36"><g fill="none" stroke="#fff" stroke-width="2.2" stroke-linejoin="round"><path d="M2 15v18h31V15"/><path d="M2 15l15.5 10L33 15"/><path d="M8 19V3a2 2 0 0 1 2-2h15a2 2 0 0 1 2 2v16"/><path d="M12 8h11M12 13h8"/></g></svg>
<div class="a" style="left:1840px;top:472px;width:80px;text-align:center;color:#fff;font-size:14px;line-height:18px">Feed</div>
<div class="a" style="left:0;top:914px;width:1920px;height:1px;background:#2a2f3a"></div>

<!-- SIDEBAR -->
<div class="a" style="left:0;top:100.5px;width:240px;text-align:center;color:#fff;font-size:22px;font-weight:bold;line-height:28px;letter-spacing:0;-webkit-text-stroke:0.6px #fff">智慧能源管理系统</div>
<div class="a" style="left:0;top:377px;width:240px;height:50px;background:#3f5577"></div>
<div class="a" style="left:0;top:377px;width:6px;height:50px;background:linear-gradient(#3cb0ff,#3d8bf5)"></div>
<!-- icons -->
<svg class="a" style="left:25px;top:177px" width="16" height="15" viewBox="0 0 16 15"><g fill="#fff"><rect x="0" y="0" width="16" height="4" rx="1"/><rect x="0" y="5.5" width="16" height="4" rx="1"/><rect x="0" y="11" width="10" height="4" rx="1"/><circle cx="13" cy="13" r="2.3" fill="none" stroke="#fff" stroke-width="1.6"/></g><g fill="#263a5c"><rect x="2" y="1.3" width="2" height="1.4"/><rect x="2" y="6.8" width="2" height="1.4"/><rect x="2" y="12.3" width="2" height="1.4"/></g></svg>
<svg class="a" style="left:25px;top:232px" width="16" height="15" viewBox="0 0 16 15"><g fill="#fff"><rect x="0" y="0" width="7" height="15" rx="1"/><rect x="5" y="4" width="11" height="8" rx="1"/><rect x="9" y="12" width="3" height="2"/><rect x="7.5" y="13.5" width="6" height="1.5"/></g><g fill="#263a5c"><rect x="1.5" y="2" width="3" height="1.2"/><rect x="1.5" y="4.5" width="3" height="1.2"/><rect x="7" y="5.5" width="7.5" height="5"/><rect x="1.5" y="11" width="2" height="2"/></g><rect x="8" y="6.5" width="5.5" height="3" fill="#fff" opacity="0"/></svg>
<svg class="a" style="left:25px;top:288px" width="16" height="15" viewBox="0 0 16 15"><path fill="#fff" d="M3 13V7a5 5 0 0 1 10 0v6h2v2H1v-2z"/><path fill="#263a5c" d="M8.8 4.5L6 8.3h2l-.8 3.2L10 7.7H8z"/></svg>
<svg class="a" style="left:24px;top:344px" width="17" height="17" viewBox="0 0 17 17"><path fill="#3a95f0" d="M8.5 0.5l7 4v8l-7 4l-7-4v-8z"/><path fill="#263a5c" d="M9.5 3.5L5.8 9h2.6l-1 4.5L11.3 8H8.7z"/></svg>
<svg class="a" style="left:50px;top:397px" width="16" height="15" viewBox="0 0 16 15"><path fill="#3a95f0" d="M2 0h12a2 2 0 0 1 2 2v5H0V2a2 2 0 0 1 2-2zM0 8h16v5a2 2 0 0 1-2 2H2a2 2 0 0 1-2-2z"/><rect x="6.5" y="5.5" width="3" height="1.2" fill="#3f5577"/><rect x="6.5" y="9" width="3" height="1.2" fill="#3f5577"/></svg>
<svg class="a" style="left:51px;top:446px" width="14" height="17" viewBox="0 0 14 17"><path fill="#fff" d="M1 2h3v-1h6v1h3a1 1 0 0 1 1 1v13a1 1 0 0 1-1 1H1a1 1 0 0 1-1-1V3a1 1 0 0 1 1-1z"/><g fill="#263a5c"><rect x="5" y="1.2" width="4" height="2"/><rect x="3" y="7" width="8" height="1.4"/><rect x="3" y="10" width="5" height="1.4"/></g></svg>
<svg class="a" style="left:51px;top:497px" width="14" height="16" viewBox="0 0 14 16"><path fill="#fff" d="M1 0h12v13H3a1 1 0 0 0 0 2h10v1H2a2 2 0 0 1-2-2V1a1 1 0 0 1 1-1z"/><rect x="5" y="0" width="5" height="1" fill="#fff"/></svg>
<svg class="a" style="left:51px;top:547px" width="14" height="17" viewBox="0 0 14 17"><path fill="#fff" d="M0 1a1 1 0 0 1 1-1h3v6l2-1.5L8 6V0h5a1 1 0 0 1 1 1v15a1 1 0 0 1-1 1H1a1 1 0 0 1-1-1z"/><text x="6" y="15" font-size="5" fill="#263a5c" font-family="Liberation Sans">ABC</text></svg>
<svg class="a" style="left:50px;top:597px" width="16" height="16" viewBox="0 0 16 16"><path fill="#fff" d="M1 0h14a1 1 0 0 1 1 1v14a1 1 0 0 1-1 1H1a1 1 0 0 1-1-1V1a1 1 0 0 1 1-1z"/><g fill="#263a5c"><rect x="3" y="3.5" width="10" height="1.3"/><rect x="3" y="6.5" width="10" height="1.3"/><rect x="3" y="9.5" width="10" height="1.3"/><rect x="0" y="12.5" width="16" height="1"/></g></svg>
<svg class="a" style="left:51px;top:647px" width="15" height="16" viewBox="0 0 15 16"><path fill="#fff" d="M7.5 0L15 2.5V8c0 4-3.5 6.8-7.5 8C3.5 14.8 0 12 0 8V2.5z"/><path fill="#263a5c" d="M7.5 3.5l1.2 2.6 2.8.3-2.1 1.9.6 2.8-2.5-1.5-2.5 1.5.6-2.8-2.1-1.9 2.8-.3z"/></svg>
<svg class="a" style="left:51px;top:697px" width="14" height="17" viewBox="0 0 14 17"><path fill="#fff" d="M0 1a1 1 0 0 1 1-1h3v6l2-1.5L8 6V0h5a1 1 0 0 1 1 1v15a1 1 0 0 1-1 1H1a1 1 0 0 1-1-1z"/><text x="6" y="15" font-size="5" fill="#263a5c" font-family="Liberation Sans">ABC</text></svg>
<svg class="a" style="left:25px;top:750px" width="16" height="16" viewBox="0 0 16 16"><path fill="#fff" d="M1 0h14a1 1 0 0 1 1 1v14a1 1 0 0 1-1 1H1a1 1 0 0 1-1-1V1a1 1 0 0 1 1-1z"/><g fill="#263a5c"><rect x="3" y="3.5" width="10" height="1.3"/><rect x="3" y="6.5" width="10" height="1.3"/><rect x="3" y="9.5" width="10" height="1.3"/><rect x="0" y="12.5" width="16" height="1"/></g></svg>
<svg class="a" style="left:25px;top:806px" width="16" height="15" viewBox="0 0 16 15"><path fill="#fff" d="M0 1a1 1 0 0 1 1-1h14a1 1 0 0 1 1 1v10a1 1 0 0 1-1 1H9v1.5h3V15H4v-1.5h3V12H1a1 1 0 0 1-1-1z"/><path fill="#263a5c" d="M5 3.5a2.2 2.2 0 0 0 2.5 3l3 3 1-1-3-3a2.2 2.2 0 0 0-3-2.5l1.4 1.4-.9.9z"/></svg>
<svg class="a" style="left:25px;top:867px" width="17" height="14" viewBox="0 0 17 14"><g fill="#fff"><rect x="0" y="0" width="17" height="2.4"/><rect x="5" y="5.8" width="12" height="2.4"/><rect x="0" y="11.6" width="17" height="2.4"/><path d="M0 7l4-3v6z"/></g></svg>
<!-- labels -->
<div class="a mi" style="left:50px;top:176px;font-size:16.6px">Device collection s...</div>
<div class="a mi" style="left:50px;top:232px;font-size:16.5px">Video Surveillance</div>
<div class="a mi" style="left:50px;top:288px;font-size:16.5px">Alarm center</div>
<div class="a mi" style="left:50px;top:343px;font-size:17.2px">Consumption unit</div>
<div class="a mi" style="left:75px;top:397px;font-size:16.9px">Consumption unit ...</div>
<div class="a mi" style="left:75px;top:447px;font-size:16.6px">Statistical analysis</div>
<div class="a mi" style="left:75px;top:497px;font-size:16.6px">Operation analysis</div>
<div class="a mi" style="left:75px;top:547px;font-size:16.6px">Economy analysis</div>
<div class="a mi" style="left:75px;top:597px;font-size:16.6px">Ranking analysis</div>
<div class="a mi" style="left:75px;top:647px;font-size:16.6px">Energy consumpti...</div>
<div class="a mi" style="left:75px;top:697px;font-size:16.6px">loadAnalysis</div>
<div class="a mi" style="left:50px;top:750px;font-size:16.5px">Reporting services</div>
<div class="a mi" style="left:50px;top:806px;font-size:16.5px">Shipment inspecti...</div>
<!-- chevrons -->
<svg class="a" style="left:206px;top:179px" width="13" height="8" viewBox="0 0 13 8"><path d="M1 1l5.5 5.5L12 1" fill="none" stroke="#8491a8" stroke-width="1.2"/></svg>
<svg class="a" style="left:206px;top:235px" width="13" height="8" viewBox="0 0 13 8"><path d="M1 1l5.5 5.5L12 1" fill="none" stroke="#8491a8" stroke-width="1.2"/></svg>
<svg class="a" style="left:206px;top:291px" width="13" height="8" viewBox="0 0 13 8"><path d="M1 1l5.5 5.5L12 1" fill="none" stroke="#8491a8" stroke-width="1.2"/></svg>
<svg class="a" style="left:206px;top:346px" width="13" height="8" viewBox="0 0 13 8"><path d="M1 7l5.5-5.5L12 7" fill="none" stroke="#8491a8" stroke-width="1.2"/></svg>
<svg class="a" style="left:206px;top:753px" width="13" height="8" viewBox="0 0 13 8"><path d="M1 1l5.5 5.5L12 1" fill="none" stroke="#8491a8" stroke-width="1.2"/></svg>
<svg class="a" style="left:206px;top:809px" width="13" height="8" viewBox="0 0 13 8"><path d="M1 1l5.5 5.5L12 1" fill="none" stroke="#8491a8" stroke-width="1.2"/></svg>

</body></html>
